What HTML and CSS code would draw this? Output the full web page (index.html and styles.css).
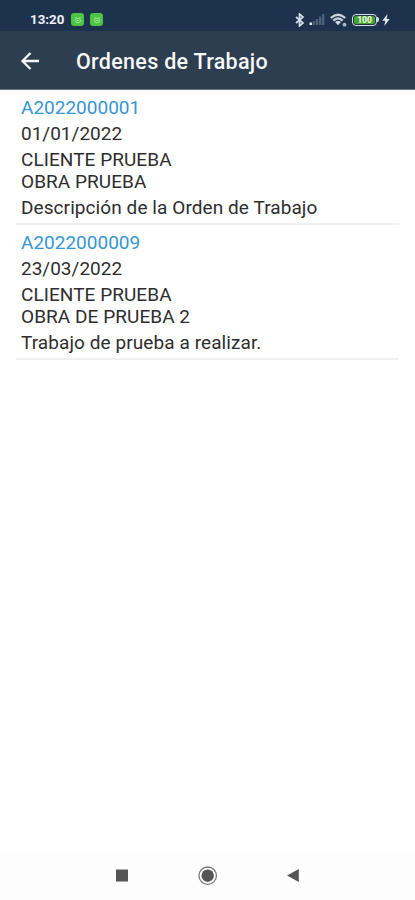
FILE: index.html
```html
<!DOCTYPE html>
<html lang="es">
<head>
    <meta charset="UTF-8">
    <meta name="viewport" content="width=device-width, initial-scale=1.0">
    <title>Ordenes de Trabajo</title>
    <link rel="stylesheet" href="styles.css">
</head>
<body>
    <!-- Status bar -->
    <div class="status-bar">
        <span class="time">13:20</span>
        <span class="app-icon"><svg width="8" height="8" viewBox="0 0 8 8"><path d="M1.5 1l1 1.2M6.5 1l-1 1.2M1.5 4.2a2.5 2 0 0 1 5 0a2.5 2.6 0 0 1-5 0M3 4.5h2" stroke="#a5eba0" stroke-width="0.9" fill="none"/></svg></span>
        <span class="app-icon"><svg width="8" height="8" viewBox="0 0 8 8"><path d="M1.5 1l1 1.2M6.5 1l-1 1.2M1.5 4.2a2.5 2 0 0 1 5 0a2.5 2.6 0 0 1-5 0M3 4.5h2" stroke="#a5eba0" stroke-width="0.9" fill="none"/></svg></span>
        <div class="status-icons">
            <svg width="10" height="14" viewBox="0 0 10 14"><path d="M1 4l7 6-3.5 3V1L8 4l-7 6" stroke="#d3dbe4" stroke-width="1.7" fill="none"/></svg>
            <svg class="signal" width="16" height="13" viewBox="0 0 16 13">
                <path d="M0.5 9.5h2.6V12H0.5z" fill="#e2e8ee"/>
                <path d="M4 8h2.3v4H4zM7 6h2.3v6H7zM10 3.5h2.3V12H10zM13 1h2.3v11H13z" fill="#4d627a"/>
            </svg>
            <svg class="wifi" width="17" height="14" viewBox="0 0 17 14">
                <path d="M0.8 5Q8 -1.6 15.2 5M3.3 7.6Q8 3.2 12.7 7.6" stroke="#cbd4de" stroke-width="2.3" fill="none"/>
                <path d="M5 9.1Q8 6.5 11 9.1L8 12.3z" fill="#cbd4de"/>
                <circle cx="14.5" cy="11.7" r="1.9" fill="#aab8c7"/>
            </svg>
            <div class="battery"><span>100</span></div>
            <svg class="bolt" width="8" height="12" viewBox="0 0 8 12"><path d="M5.5 0L0.3 6.8h3L2.3 12 7.7 5h-3z" fill="#e2e8ee"/></svg>
        </div>
    </div>

    <header class="toolbar">
        <svg class="back" width="20" height="20" viewBox="0 0 20 20"><path d="M19 10H2.5M10.5 2L2.5 10l8 8" stroke="#f4f6f8" stroke-width="2.3" fill="none"/></svg>
        <h1>Ordenes de Trabajo</h1>
    </header>

    <main class="orders">
        <div class="order">
            <p class="code">A2022000001</p>
            <p class="date">01/01/2022</p>
            <p class="client">CLIENTE PRUEBA<br>OBRA PRUEBA</p>
            <p class="description">Descripción de la Orden de Trabajo</p>
        </div>
        <div class="order">
            <p class="code">A2022000009</p>
            <p class="date">23/03/2022</p>
            <p class="client">CLIENTE PRUEBA<br>OBRA DE PRUEBA 2</p>
            <p class="description">Trabajo de prueba a realizar.</p>
        </div>
    </main>

    <!-- System navigation -->
    <nav class="nav-bar">
        <svg width="20" height="20" viewBox="0 0 20 20"><path d="M4 3.5h12v12H4z" fill="#555"/></svg>
        <svg width="20" height="20" viewBox="0 0 20 20">
            <circle cx="9.7" cy="9.7" r="8.7" stroke="#777" stroke-width="1.3" fill="none"/>
            <circle cx="9.7" cy="9.7" r="6.2" fill="#555"/>
        </svg>
        <svg width="20" height="20" viewBox="0 0 20 20"><path d="M14.8 3v13L3 9.5z" fill="#555"/></svg>
    </nav>
</body>
</html>
```

FILE: styles.css
```css
* {
    box-sizing: border-box;
}

body {
    display: flex;
    flex-direction: column;
    height: 900px;
    margin: 0;
    background-color: #fff;
    font-family: Roboto, sans-serif;
    color: #2e2e2e;
}

svg {
    display: block;
    flex: none;
}

.status-bar {
    display: flex;
    align-items: center;
    height: 31px;
    padding: 8px 25px 0 30px;
    background-color: #1d334d;
}

.time {
    width: 41px;
    color: #edf1f5;
    font-size: 13.3px;
    font-weight: 700;
}

.app-icon {
    display: flex;
    align-items: center;
    justify-content: center;
    width: 13px;
    height: 13px;
    margin-right: 6px;
    border-radius: 3px;
    background-color: #4ec444;
}

.status-icons {
    display: flex;
    align-items: center;
    margin-left: auto;
}

.signal {
    margin-left: 4px;
}

.wifi {
    margin-left: 5px;
}

.battery {
    position: relative;
    width: 25px;
    height: 12px;
    margin-left: 5px;
    border: 1.5px solid #d3dbe4;
    border-radius: 4px;
    padding: 1px;
}

.battery::after {
    content: "";
    position: absolute;
    top: 2px;
    right: -3px;
    width: 2px;
    height: 5px;
    border-radius: 0 2px 2px 0;
    background-color: #d3dbe4;
}

.battery span {
    display: block;
    height: 8px;
    border-radius: 2px;
    background-color: #43a52b;
    color: #fff;
    font-size: 8.5px;
    font-weight: 700;
    line-height: 8px;
    text-align: center;
}

.bolt {
    margin-left: 5px;
}

.toolbar {
    display: flex;
    align-items: center;
    height: 59px;
    padding: 2px 20px 0;
    background-color: #2c3e50;
    border-bottom: 1px solid #667582;
}

.toolbar h1 {
    margin: 0 0 0 36px;
    color: #f8f9fb;
    font-size: 21.5px;
    font-weight: 500;
    letter-spacing: 0.3px;
}

.orders {
    flex: 1;
    padding: 0 16px;
}

.order {
    height: 135px;
    padding: 7px 5px 0;
    border-bottom: 2px solid #f0f0f0;
    font-size: 19px;
    line-height: 22.5px;
}

.order p {
    margin: 0 0 3.4px;
    white-space: nowrap;
}

.order .code {
    color: #3597d3;
}

.order .client {
    letter-spacing: 0.06px;
}

.order .description {
    letter-spacing: 0.08px;
}

.nav-bar {
    display: flex;
    align-items: center;
    justify-content: center;
    gap: 66px;
    height: 49px;
    background-color: #fdfdfd;
}
```
